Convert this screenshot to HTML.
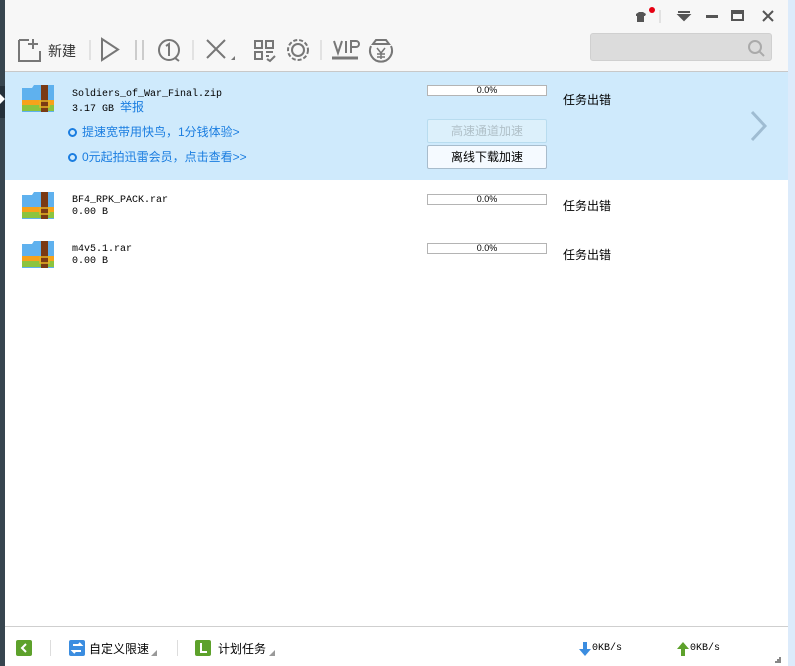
<!DOCTYPE html>
<html><head><meta charset="utf-8"><style>
*{margin:0;padding:0;box-sizing:border-box}
body{width:795px;height:666px;overflow:hidden;background:#fff;position:relative;font-family:"Liberation Sans","Noto Sans CJK SC",sans-serif;font-size:12px;color:#000}
.abs{position:absolute}
.mono{font-family:"Liberation Mono","Noto Sans CJK SC",monospace;font-size:10px;line-height:12px}
.prog{position:absolute;left:427px;width:120px;height:11px;border:1px solid #b4b4b4;background:#fff;font-size:9px;text-align:center;line-height:9px}
.err{position:absolute;left:563px;font-size:12px}
.zip{position:absolute;left:22px;width:32px;height:28px}
</style></head><body>
<div class="abs" style="left:0;top:0;width:788px;height:71px;background:#f7f7f7"></div>
<div class="abs" style="left:5px;top:71px;width:783px;height:1px;background:#c8c8c8"></div>
<div class="abs" style="left:0;top:0;width:5px;height:666px;background:#37454f"></div>
<div class="abs" style="left:0;top:86px;width:5px;height:32px;background:#24303a"></div>
<div class="abs" style="left:0;top:94px;width:0;height:0;border:5px solid transparent;border-left-color:#fff"></div>
<div class="abs" style="left:788px;top:0;width:7px;height:666px;background:#dcebfb"></div>

<svg class="abs" style="left:630px;top:4px" width="150" height="22">
<path d="M6 10l3-2h4l3 2-1 2h-1v6h-7v-6h-1z" fill="#555"/>
<circle cx="22" cy="6" r="3" fill="#e60012"/>
<line x1="30" y1="6" x2="30" y2="19" stroke="#ccc"/>
<path d="M48 8h12M49 11h10l-5 5z" stroke="#555" stroke-width="2" fill="#555"/>
<rect x="76" y="11" width="12" height="3" fill="#555"/>
<rect x="102" y="7" width="11" height="9" fill="none" stroke="#555" stroke-width="2"/><rect x="102" y="7" width="11" height="3" fill="#555"/>
<path d="M133 7l10 10M143 7l-10 10" stroke="#555" stroke-width="2"/>
</svg>

<svg class="abs" style="left:15px;top:36px" width="380" height="28" stroke="#777" fill="none" stroke-width="2">
<path d="M4 4h10M4 4v21h21v-10M18 3v10M13 8h10"/>
<line x1="75" y1="4" x2="75" y2="24" stroke="#ccc" stroke-width="1"/>
<path d="M87 3v21l16-10.5z"/>
<path d="M121 4v20M128 4v20" stroke="#ccc"/>
<circle cx="154" cy="14" r="10"/><path d="M151 10l3-2v12"/><path d="M160 22l4 3" />
<line x1="178" y1="4" x2="178" y2="24" stroke="#ccc" stroke-width="1"/>
<path d="M192 4l18 18M210 4l-18 18"/><path d="M216 24l4-4v4z" fill="#777" stroke="none"/>
<rect x="240" y="5" width="7" height="7"/><rect x="251" y="5" width="7" height="7"/><rect x="240" y="16" width="7" height="7"/><path d="M251 16h7M251 20h3M252 23l3 2 5-5"/>
<circle cx="283" cy="14" r="6"/><circle cx="283" cy="14" r="10" stroke-dasharray="4 2"/>
<line x1="306" y1="4" x2="306" y2="24" stroke="#ccc" stroke-width="1"/>
<path d="M319 5l4 12 4-12M331 5v12M336 17v-12h5a3 3 0 010 6h-5"/><path d="M317 22h26" stroke-width="3"/>
<path d="M356 10a11 11 0 1020 0M358 8l3-4h10l3 4z"/><path d="M362 12l4 5 4-5M366 17v6M362 18h8M362 21h8" stroke-width="1.5"/>
</svg>
<div class="abs" style="left:48px;top:41px;font-size:14px;color:#333">新建</div>
<div class="abs" style="left:590px;top:33px;width:182px;height:28px;background:#dcdcdc;border:1px solid #d0d0d0;border-radius:3px"></div>
<svg class="abs" style="left:746px;top:38px" width="22" height="20" fill="none" stroke="#aaa" stroke-width="2"><circle cx="9" cy="9" r="6"/><path d="M13 13l5 5"/></svg>

<div class="abs" style="left:5px;top:72px;width:783px;height:108px;background:#cfeafc"></div>
<svg class="zip" style="top:84px" viewBox="0 0 32 28"><path d="M0 4h10l2-3h20v27H0z" fill="#5fb1ee"/><rect x="0" y="16" width="32" height="5" fill="#f7a21b"/><rect x="0" y="21" width="32" height="6" fill="#8cc43f"/><rect x="19" y="1" width="7" height="27" fill="#7a3a14"/><rect x="18" y="17" width="9" height="6" fill="none" stroke="#e6b325" stroke-width="1.5"/></svg>
<div class="abs mono" style="left:72px;top:89px">Soldiers_of_War_Final.zip</div>
<div class="abs mono" style="left:72px;top:101px">3.17 GB <span style="color:#1a7de0;font-family:'Noto Sans CJK SC',sans-serif;font-size:12px">举报</span></div>
<div class="abs" style="left:68px;top:123px;color:#1a7de0;font-size:12px"><span style="display:inline-block;width:9px;height:9px;border:2px solid #1a7de0;border-radius:50%;margin-right:5px;vertical-align:-1px"></span>提速宽带用快鸟，1分钱体验&gt;</div>
<div class="abs" style="left:68px;top:148px;color:#1a7de0;font-size:12px"><span style="display:inline-block;width:9px;height:9px;border:2px solid #1a7de0;border-radius:50%;margin-right:5px;vertical-align:-1px"></span>0元起拍迅雷会员，点击查看&gt;&gt;</div>
<div class="prog" style="top:85px">0.0%</div>
<div class="err" style="top:91px">任务出错</div>
<div class="abs" style="left:427px;top:119px;width:120px;height:24px;border:1px solid #b8dcef;border-radius:2px;background:#dcf0fb;color:#b0c0c8;text-align:center;line-height:22px">高速通道加速</div>
<div class="abs" style="left:427px;top:145px;width:120px;height:24px;border:1px solid #a8bccc;border-radius:2px;background:#f5faff;text-align:center;line-height:22px">离线下载加速</div>
<svg class="abs" style="left:748px;top:108px" width="22" height="36"><path d="M4 4l13 14-13 14" stroke="#9fbcd2" stroke-width="3" fill="none"/></svg>

<svg class="zip" style="top:191px" viewBox="0 0 32 28"><path d="M0 4h10l2-3h20v27H0z" fill="#5fb1ee"/><rect x="0" y="16" width="32" height="5" fill="#f7a21b"/><rect x="0" y="21" width="32" height="6" fill="#8cc43f"/><rect x="19" y="1" width="7" height="27" fill="#7a3a14"/><rect x="18" y="17" width="9" height="6" fill="none" stroke="#e6b325" stroke-width="1.5"/></svg>
<div class="abs mono" style="left:72px;top:195px">BF4_RPK_PACK.rar</div>
<div class="abs mono" style="left:72px;top:207px">0.00 B</div>
<div class="prog" style="top:194px">0.0%</div>
<div class="err" style="top:197px">任务出错</div>

<svg class="zip" style="top:240px" viewBox="0 0 32 28"><path d="M0 4h10l2-3h20v27H0z" fill="#5fb1ee"/><rect x="0" y="16" width="32" height="5" fill="#f7a21b"/><rect x="0" y="21" width="32" height="6" fill="#8cc43f"/><rect x="19" y="1" width="7" height="27" fill="#7a3a14"/><rect x="18" y="17" width="9" height="6" fill="none" stroke="#e6b325" stroke-width="1.5"/></svg>
<div class="abs mono" style="left:72px;top:244px">m4v5.1.rar</div>
<div class="abs mono" style="left:72px;top:256px">0.00 B</div>
<div class="prog" style="top:243px">0.0%</div>
<div class="err" style="top:246px">任务出错</div>

<div class="abs" style="left:5px;top:626px;width:783px;height:1px;background:#cfcfcf"></div>
<div class="abs" style="left:16px;top:640px;width:16px;height:16px;background:#5da12b;border-radius:2px"></div>
<svg class="abs" style="left:16px;top:640px" width="16" height="16"><path d="M10 4l-4 4 4 4" stroke="#fff" stroke-width="2" fill="none"/></svg>
<div class="abs" style="left:50px;top:640px;width:1px;height:16px;background:#ddd"></div>
<div class="abs" style="left:69px;top:640px;width:16px;height:16px;background:#3b8de0;border-radius:2px"></div>
<svg class="abs" style="left:69px;top:640px" width="16" height="16"><path d="M4 5h8l-2-2M12 11H4l2 2" stroke="#fff" stroke-width="2" fill="none"/></svg>
<div class="abs" style="left:89px;top:640px;font-size:12px">自定义限速</div>
<div class="abs" style="left:151px;top:650px;border-left:6px solid transparent;border-bottom:6px solid #999"></div>
<div class="abs" style="left:177px;top:640px;width:1px;height:16px;background:#ddd"></div>
<div class="abs" style="left:195px;top:640px;width:16px;height:16px;background:#5da12b;border-radius:2px"></div>
<svg class="abs" style="left:195px;top:640px" width="16" height="16"><path d="M6 3v9h6" stroke="#fff" stroke-width="2" fill="none"/></svg>
<div class="abs" style="left:218px;top:640px;font-size:12px">计划任务</div>
<div class="abs" style="left:269px;top:650px;border-left:6px solid transparent;border-bottom:6px solid #999"></div>
<svg class="abs" style="left:578px;top:641px" width="14" height="16"><path d="M5 1h4v7h4l-6 7-6-7h4z" fill="#3b8de0"/></svg>
<div class="abs mono" style="left:592px;top:643px">0KB/s</div>
<svg class="abs" style="left:676px;top:641px" width="14" height="16"><path d="M5 15h4V8h4L7 1 1 8h4z" fill="#5da12b"/></svg>
<div class="abs mono" style="left:690px;top:643px">0KB/s</div>
<svg class="abs" style="left:774px;top:656px" width="8" height="8" fill="#888"><rect x="5" y="1" width="2" height="2"/><rect x="3" y="3" width="2" height="2"/><rect x="5" y="3" width="2" height="2"/><rect x="1" y="5" width="2" height="2"/><rect x="3" y="5" width="2" height="2"/><rect x="5" y="5" width="2" height="2"/></svg>
</body></html>
